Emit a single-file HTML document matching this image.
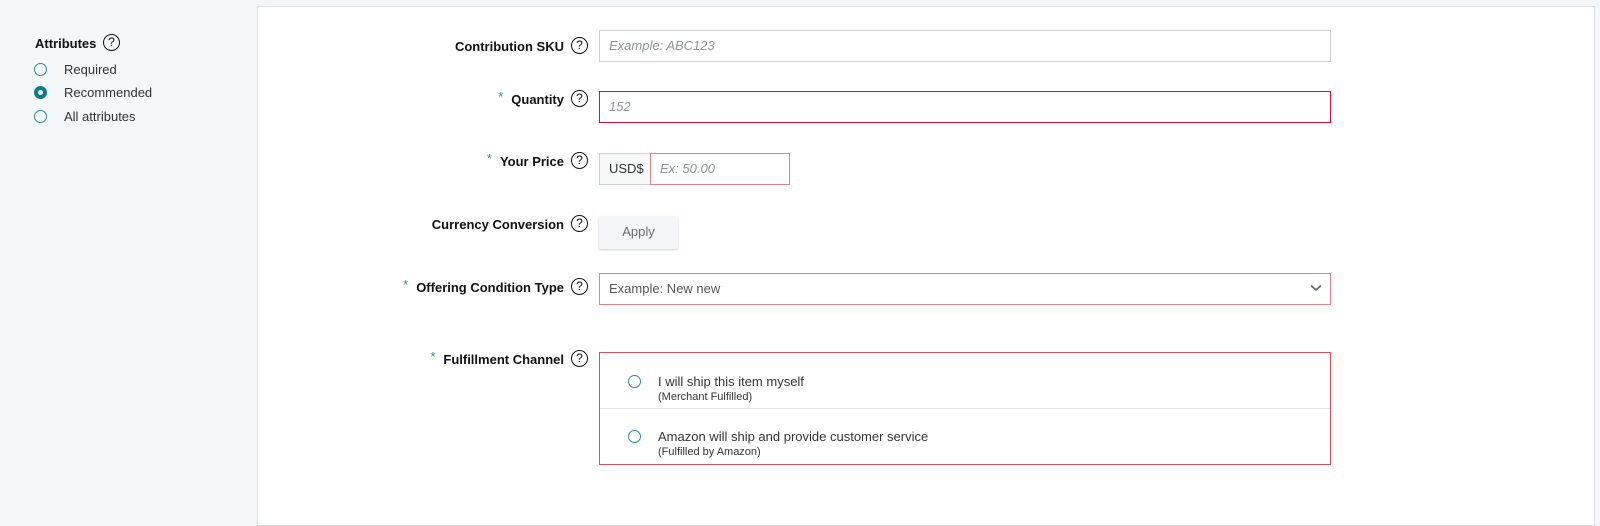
<!DOCTYPE html>
<html><head><meta charset="utf-8"><style>
body{margin:0;width:1600px;height:512px;background:#f4f7f8;font-family:"Liberation Sans",Arial,sans-serif;position:relative;overflow:hidden;color:#0f1111}
.abs{position:absolute}
.panel{left:257px;top:6px;width:1338px;height:520px;background:#fff;border:1px solid #dde1e2;box-sizing:border-box}
.q{display:inline-block;width:17px;height:17px;border:1.5px solid #111;border-radius:50%;box-sizing:border-box;font-size:12px;font-weight:normal;line-height:14px;text-align:center;color:#111}
.lbl{font-size:13px;font-weight:bold;text-align:right;width:400px}
.lbl .s{color:#2a8a9a;font-weight:normal;margin-right:8px;position:relative;top:-3px}
.ic{left:571px}
.radio{width:13px;height:13px;border:1.3px solid #2b8a9a;border-radius:50%;box-sizing:border-box}
.box{border:1px solid #ccd0d1;box-sizing:border-box;font-size:13px;font-style:italic;color:#8d9495;padding-left:9px}
.red{border-color:#d0103a}
.pink{border-color:#e0818f}
.t{font-size:13px;color:#333}
</style></head><body>
<div class="abs panel"></div>

<div class="abs" style="left:35px;top:36px;font-size:13px;font-weight:bold">Attributes</div>
<div class="abs q" style="left:103px;top:34px">?</div>
<div class="abs radio" style="left:34px;top:63px"></div><div class="abs t" style="left:64px;top:62px">Required</div>
<div class="abs radio" style="left:34px;top:86px;border:4px solid #0f7a8a"></div><div class="abs t" style="left:64px;top:85px">Recommended</div>
<div class="abs radio" style="left:34px;top:110px"></div><div class="abs t" style="left:64px;top:109px">All attributes</div>

<div class="abs lbl" style="left:164px;top:39px">Contribution SKU</div><div class="abs q ic" style="top:37px">?</div>
<div class="abs box" style="left:599px;top:30px;width:732px;height:32px;line-height:30px;border-width:1.5px">Example: ABC123</div>

<div class="abs lbl" style="left:164px;top:92px"><span class="s">*</span>Quantity</div><div class="abs q ic" style="top:90px">?</div>
<div class="abs box red" style="left:599px;top:91px;width:732px;height:32px;line-height:30px">152</div>

<div class="abs lbl" style="left:164px;top:154px"><span class="s">*</span>Your Price</div><div class="abs q ic" style="top:152px">?</div>
<div class="abs box" style="left:599px;top:153px;width:52px;height:32px;line-height:30px;background:#f7f8f8;font-style:normal;color:#333;padding-left:9px">USD$</div>
<div class="abs box pink" style="left:650px;top:153px;width:140px;height:32px;line-height:30px">Ex: 50.00</div>

<div class="abs lbl" style="left:164px;top:217px">Currency Conversion</div><div class="abs q ic" style="top:215px">?</div>
<div class="abs" style="left:599px;top:216px;width:79px;height:33px;background:#f3f6f7;border-radius:2px;box-shadow:0 1px 2px rgba(0,0,0,.2);font-size:13px;color:#6a7070;text-align:center;line-height:32px">Apply</div>

<div class="abs lbl" style="left:164px;top:280px"><span class="s">*</span>Offering Condition Type</div><div class="abs q ic" style="top:278px">?</div>
<div class="abs box pink" style="left:599px;top:273px;width:732px;height:32px;line-height:30px;font-style:normal;color:#555">Example: New new</div>
<svg class="abs" style="left:1310px;top:284px" width="12" height="8"><path d="M1 1.5L6 6L11 1.5" stroke="#5a6a70" stroke-width="1.6" fill="none"/></svg>

<div class="abs lbl" style="left:164px;top:352px"><span class="s">*</span>Fulfillment Channel</div><div class="abs q ic" style="top:350px">?</div>
<div class="abs" style="left:599px;top:352px;width:732px;height:113px;border:1px solid #d8505f;box-sizing:border-box"></div>
<div class="abs" style="left:600px;top:408px;width:730px;height:1px;background:#e3e6e6"></div>
<div class="abs radio" style="left:628px;top:375px"></div>
<div class="abs t" style="left:658px;top:374px">I will ship this item myself</div>
<div class="abs" style="left:658px;top:391px;font-size:11px;color:#333">(Merchant Fulfilled)</div>
<div class="abs radio" style="left:628px;top:430px"></div>
<div class="abs t" style="left:658px;top:429px">Amazon will ship and provide customer service</div>
<div class="abs" style="left:658px;top:446px;font-size:11px;color:#333">(Fulfilled by Amazon)</div>
</body></html>
